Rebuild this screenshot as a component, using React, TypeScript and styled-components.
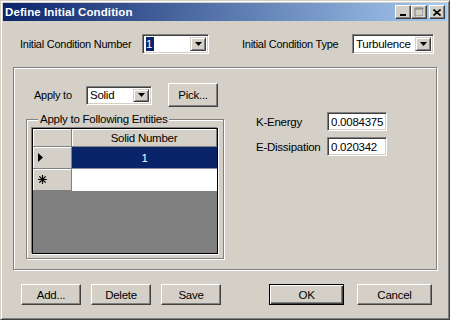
import React from 'react';
import styled, { createGlobalStyle } from 'styled-components';

const GlobalStyle = createGlobalStyle`
  html, body {
    margin: 0;
    padding: 0;
    background: #d4d0c8;
  }
  * {
    box-sizing: border-box;
  }
`;

const FACE = '#d4d0c8';
const NAVY = '#0a246a';

const Window = styled.div`
  width: 450px;
  height: 320px;
  display: flex;
  flex-direction: column;
  padding: 2px;
  background: ${FACE};
  border: 1px solid;
  border-color: ${FACE} #404040 #404040 ${FACE};
  box-shadow: inset 1px 1px 0 #fff, inset -1px -1px 0 #808080;
  font-family: 'Liberation Sans', Arial, sans-serif;
  font-size: 11px;
  letter-spacing: -0.25px;
  color: #000;
`;

const TitleBar = styled.div`
  height: 18px;
  display: flex;
  align-items: center;
  padding-left: 2px;
  background: linear-gradient(to right, ${NAVY}, #a6caf0);
`;

const TitleText = styled.div`
  flex: 1;
  color: #fff;
  font-weight: bold;
  font-size: 11.5px;
  letter-spacing: 0.1px;
`;

const CaptionButton = styled.div<{ $gap?: number }>`
  width: 16px;
  height: 14px;
  margin-left: ${(p) => p.$gap || 0}px;
  display: flex;
  align-items: center;
  justify-content: center;
  background: ${FACE};
  border: 1px solid;
  border-color: #fff #404040 #404040 #fff;
  box-shadow: inset -1px -1px 0 #808080;
`;

const Content = styled.div`
  flex: 1;
  display: flex;
  flex-direction: column;
  padding: 0 10px;
`;

const TopRow = styled.div`
  display: flex;
  align-items: center;
  height: 20px;
  margin-top: 13px;
  padding-left: 7px;
`;

const Label = styled.div<{ $w: number; $ml?: number }>`
  width: ${(p) => p.$w}px;
  margin-left: ${(p) => p.$ml || 0}px;
  white-space: nowrap;
`;

const Sunken = styled.div<{ $w: number; $h: number }>`
  width: ${(p) => p.$w}px;
  height: ${(p) => p.$h}px;
  display: flex;
  align-items: stretch;
  background: #fff;
  border: 1px solid;
  border-color: #808080 #fff #fff #808080;
  box-shadow: inset 1px 1px 0 #404040, inset -1px -1px 0 ${FACE};
  padding: 2px;
`;

const FieldText = styled.div<{ $sel?: boolean }>`
  flex: 1;
  display: flex;
  align-items: center;
  padding-left: 1px;
  font-size: 11.5px;
  overflow: hidden;
  white-space: nowrap;
  & > span {
    background: ${(p) => (p.$sel ? NAVY : 'transparent')};
    color: ${(p) => (p.$sel ? '#fff' : '#000')};
    height: 100%;
    display: flex;
    align-items: center;
    padding-right: ${(p) => (p.$sel ? 2 : 0)}px;
  }
`;

const DropButton = styled.div`
  width: 16px;
  display: flex;
  align-items: center;
  justify-content: center;
  background: ${FACE};
  border: 1px solid;
  border-color: ${FACE} #404040 #404040 ${FACE};
  box-shadow: inset 1px 1px 0 #fff, inset -1px -1px 0 #808080;
`;

const Panel = styled.div`
  margin-top: 13px;
  height: 203px;
  display: flex;
  border: 1px solid #808080;
  box-shadow: inset 1px 1px 0 #fff, 1px 1px 0 #fff;
`;

const LeftCol = styled.div`
  display: flex;
  flex-direction: column;
  padding-left: 12px;
`;

const ApplyRow = styled.div`
  display: flex;
  align-items: center;
  height: 24px;
  margin-top: 15px;
  padding-left: 8px;
`;

const Button = styled.div<{ $w: number; $h: number; $ml?: number; $default?: boolean }>`
  width: ${(p) => p.$w}px;
  height: ${(p) => p.$h}px;
  margin-left: ${(p) => p.$ml || 0}px;
  display: flex;
  align-items: center;
  justify-content: center;
  background: ${FACE};
  border: 1px solid;
  border-color: ${(p) => (p.$default ? '#000' : '#fff #404040 #404040 #fff')};
  box-shadow: ${(p) =>
    p.$default
      ? 'inset 1px 1px 0 #fff, inset -1px -1px 0 #404040, inset -2px -2px 0 #808080'
      : `inset -1px -1px 0 #808080`};
  font-size: 11.5px;
`;

const GroupBox = styled.fieldset`
  width: 198px;
  margin: 6px 0 0 0;
  padding: 2px 5px 4px 5px;
  border: 1px solid #808080;
  box-shadow: inset 1px 1px 0 #fff, 1px 1px 0 #fff;
`;

const Legend = styled.legend`
  padding: 0 2px;
  margin-left: 6px;
  line-height: 13px;
  font-size: 11.5px;
  background: ${FACE};
`;

const Grid = styled.div`
  height: 126px;
  display: grid;
  grid-template-columns: 39px 1fr;
  grid-template-rows: 18px 22px 22px 1fr;
  background: #808080;
  border: 1px solid #000;
  box-shadow: -1px -1px 0 #808080, 1px 1px 0 #fff;
`;

const HeadCell = styled.div`
  display: flex;
  align-items: center;
  justify-content: center;
  background: ${FACE};
  border-right: 1px solid #808080;
  border-bottom: 1px solid #808080;
  box-shadow: inset 1px 1px 0 #fff;
  font-size: 11.5px;
`;

const RowHead = styled(HeadCell)`
  justify-content: flex-start;
  padding-left: 5px;
`;

const DataCell = styled.div<{ $sel?: boolean }>`
  display: flex;
  align-items: center;
  justify-content: center;
  background: ${(p) => (p.$sel ? NAVY : '#fff')};
  color: ${(p) => (p.$sel ? '#fff' : '#000')};
  border-bottom: 1px solid ${(p) => (p.$sel ? '#8a8fa8' : '#fff')};
  font-size: 11.5px;
`;

const Filler = styled.div`
  grid-column: 1 / span 2;
`;

const RightCol = styled.div`
  display: flex;
  flex-direction: column;
  gap: 6px;
  padding-left: 32px;
  margin-top: 44px;
`;

const ValueRow = styled.div`
  display: flex;
  align-items: center;
  font-size: 11.5px;
`;

const BottomRow = styled.div`
  display: flex;
  align-items: center;
  margin-top: 14px;
  padding-left: 8px;
`;

const Arrow = () => (
  <svg width="7" height="4" viewBox="0 0 7 4">
    <path d="M0 0h7L3.5 4z" fill="#000" />
  </svg>
);

const Combo = ({ w, h, text, sel }: { w: number; h: number; text: string; sel?: boolean }) => (
  <Sunken $w={w} $h={h}>
    <FieldText $sel={sel}>
      <span>{text}</span>
    </FieldText>
    <DropButton>
      <Arrow />
    </DropButton>
  </Sunken>
);

const App = () => {
  return (
    <>
      <GlobalStyle />
      <Window>
        <TitleBar>
          <TitleText>Define Initial Condition</TitleText>
          <CaptionButton>
            <svg width="8" height="8" viewBox="0 0 8 8">
              <rect x="1" y="6" width="6" height="2" fill="#000" />
            </svg>
          </CaptionButton>
          <CaptionButton>
            <svg width="10" height="10" viewBox="0 0 10 10">
              <path d="M1 1h8v8H1z M1 2h8" stroke="#808080" fill="none" strokeWidth="1" />
              <path d="M2 10h8V2" stroke="#fff" fill="none" strokeWidth="1" />
            </svg>
          </CaptionButton>
          <CaptionButton $gap={2}>
            <svg width="8" height="7" viewBox="0 0 8 7">
              <path d="M0.5 0.5l7 6M7.5 0.5l-7 6" stroke="#000" strokeWidth="1.6" />
            </svg>
          </CaptionButton>
          <div style={{ width: 2 }} />
        </TitleBar>
        <Content>
          <TopRow>
            <Label $w={122}>Initial Condition Number</Label>
            <Combo w={67} h={20} text="1" sel />
            <Label $w={110} $ml={33}>
              Initial Condition Type
            </Label>
            <Combo w={82} h={20} text="Turbulence" />
          </TopRow>
          <Panel>
            <LeftCol>
              <ApplyRow>
                <Label $w={52}>Apply to</Label>
                <Combo w={66} h={19} text="Solid" />
                <Button $w={50} $h={24} $ml={16}>
                  Pick...
                </Button>
              </ApplyRow>
              <GroupBox>
                <Legend>Apply to Following Entities</Legend>
                <Grid>
                  <HeadCell />
                  <HeadCell>Solid Number</HeadCell>
                  <RowHead>
                    <svg width="5" height="9" viewBox="0 0 5 9">
                      <path d="M0 0l5 4.5L0 9z" fill="#000" />
                    </svg>
                  </RowHead>
                  <DataCell $sel>1</DataCell>
                  <RowHead>
                    <svg width="9" height="9" viewBox="0 0 9 9">
                      <path
                        d="M4.5 0v9M0 4.5h9M1.3 1.3l6.4 6.4M7.7 1.3l-6.4 6.4"
                        stroke="#000"
                        strokeWidth="1.2"
                      />
                    </svg>
                  </RowHead>
                  <DataCell />
                  <Filler />
                </Grid>
              </GroupBox>
            </LeftCol>
            <RightCol>
              <ValueRow>
                <Label $w={71}>K-Energy</Label>
                <Sunken $w={60} $h={19}>
                  <FieldText>
                    <span>0.0084375</span>
                  </FieldText>
                </Sunken>
              </ValueRow>
              <ValueRow>
                <Label $w={71}>E-Dissipation</Label>
                <Sunken $w={60} $h={19}>
                  <FieldText>
                    <span>0.020342</span>
                  </FieldText>
                </Sunken>
              </ValueRow>
            </RightCol>
          </Panel>
          <BottomRow>
            <Button $w={60} $h={21}>
              Add...
            </Button>
            <Button $w={60} $h={21} $ml={10}>
              Delete
            </Button>
            <Button $w={60} $h={21} $ml={10}>
              Save
            </Button>
            <Button $w={75} $h={21} $ml={48} $default>
              OK
            </Button>
            <Button $w={75} $h={21} $ml={13}>
              Cancel
            </Button>
          </BottomRow>
        </Content>
      </Window>
    </>
  );
};

export default App;
